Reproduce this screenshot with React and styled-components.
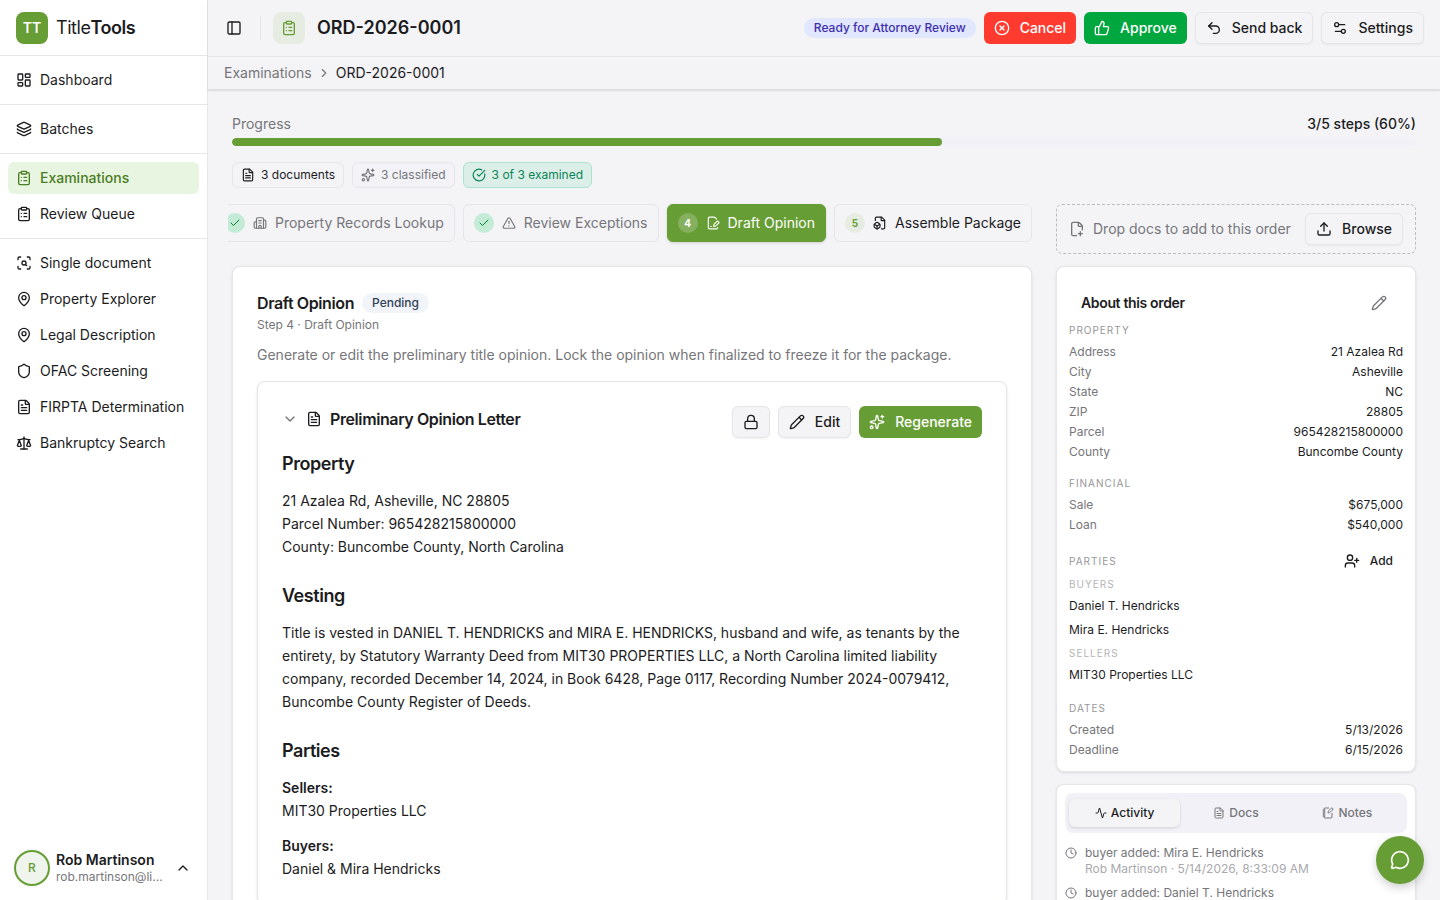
import React from "react";
import styled, { createGlobalStyle } from "styled-components";
import {
  Activity,
  Building2,
  Check,
  ChevronDown,
  ChevronRight,
  ChevronUp,
  CircleCheckBig,
  CircleX,
  ClipboardList,
  Clock,
  FileBox,
  FilePenLine,
  FilePlusCorner,
  FileText,
  Layers,
  LayoutDashboard,
  Lock,
  MapPin,
  MessageCircle,
  NotebookPen,
  PanelLeft,
  Pencil,
  Scale,
  ScanSearch,
  Settings2,
  Shield,
  Sparkles,
  ThumbsUp,
  TriangleAlert,
  Undo2,
  Upload,
  UserPlus,
} from "lucide-react";

const green = "#669d34";
const text = "#1c1c1e";
const muted = "#76767a";
const faint = "#a9a9ad";
const line = "#e5e5ea";
const surface = "#f4f4f7";

const GlobalStyle = createGlobalStyle`
  * {
    box-sizing: border-box;
  }

  body {
    margin: 0;
    background: ${surface};
    color: ${text};
    font-family: Inter, "Liberation Sans", sans-serif;
    font-size: 14px;
    line-height: 20px;
    -webkit-font-smoothing: antialiased;
  }

  h1, h2, h3, h4, p, ul, dl, dd {
    margin: 0;
    padding: 0;
  }

  ul {
    list-style: none;
  }

  a {
    color: inherit;
    text-decoration: none;
  }

  button {
    font: inherit;
    color: inherit;
    cursor: pointer;
  }

  svg {
    flex-shrink: 0;
  }
`;

const Shell = styled.div`
  display: flex;
  height: 100vh;
  overflow: hidden;
`;

/* sidebar */

const Sidebar = styled.aside`
  display: flex;
  flex-direction: column;
  flex: 0 0 208px;
  background: white;
  border-right: 1px solid ${line};
`;

const Brand = styled.a`
  display: flex;
  align-items: center;
  gap: 8px;
  height: 56px;
  padding: 0 16px;
  border-bottom: 1px solid ${line};
  font-size: 18px;
  line-height: 28px;
  letter-spacing: -0.025em;

  b {
    font-weight: 600;
  }
`;

const BrandMark = styled.span`
  display: flex;
  align-items: center;
  justify-content: center;
  width: 32px;
  height: 32px;
  border-radius: 8px;
  background: ${green};
  color: white;
  font-size: 14px;
  font-weight: 600;
  letter-spacing: normal;
`;

const NavGroup = styled.ul`
  display: flex;
  flex-direction: column;
  gap: 4px;
  padding: 8px;
  border-bottom: 1px solid ${line};

  &:last-child {
    border-bottom: none;
  }
`;

const NavLink = styled.a`
  display: flex;
  align-items: center;
  gap: 8px;
  height: 32px;
  padding: 0 8px;
  border-radius: 6px;
  background: ${(props) => (props.$active ? "#e8f5e0" : "transparent")};
  color: ${(props) => (props.$active ? "#4a7c23" : text)};
  font-weight: ${(props) => (props.$active ? 500 : 400)};
`;

const UserMenu = styled.button`
  display: flex;
  align-items: center;
  gap: 6px;
  margin-top: auto;
  padding: 14px 16px 14px 14px;
  border: none;
  background: none;
  text-align: left;

  svg {
    margin-left: auto;
  }
`;

const Avatar = styled.span`
  display: flex;
  align-items: center;
  justify-content: center;
  flex-shrink: 0;
  width: 36px;
  height: 36px;
  border: 2px solid ${green};
  border-radius: 50%;
  background: #eff4ec;
  color: ${green};
  font-size: 12px;
  font-weight: 500;
`;

const UserText = styled.span`
  display: flex;
  flex-direction: column;
`;

const UserName = styled.span`
  font-weight: 600;
  line-height: 18px;
`;

const UserMail = styled.span`
  color: ${muted};
  font-size: 12px;
  line-height: 16px;
`;

/* header */

const Page = styled.div`
  display: flex;
  flex-direction: column;
  flex: 1;
  min-width: 0;
`;

const Header = styled.header`
  border-bottom: 1px solid #dddde1;
  box-shadow: 0 1px 2px rgba(0, 0, 0, 0.1);
`;

const TopBar = styled.div`
  display: flex;
  align-items: center;
  gap: 12px;
  height: 57px;
  padding: 0 16px;
  border-bottom: 1px solid ${line};
`;

const PanelToggle = styled.button`
  display: flex;
  padding: 2px;
  border: none;
  background: none;
`;

const Divider = styled.span`
  width: 1px;
  height: 24px;
  margin-left: 4px;
  background: ${line};
`;

const OrderIcon = styled.span`
  display: flex;
  align-items: center;
  justify-content: center;
  width: 32px;
  height: 32px;
  border-radius: 8px;
  background: #e6ece2;
  color: ${green};
`;

const OrderTitle = styled.h1`
  font-size: 18px;
  line-height: 28px;
  font-weight: 600;
`;

const Actions = styled.div`
  display: flex;
  align-items: center;
  gap: 8px;
  margin-left: auto;
`;

const Badge = styled.span`
  padding: 2px 10px;
  border-radius: 10px;
  background: ${(props) => (props.$tone === "indigo" ? "#e0e7ff" : "#f1f5f9")};
  color: ${(props) => (props.$tone === "indigo" ? "#3f2fae" : "#314158")};
  font-size: 12px;
  line-height: 16px;
  font-weight: 500;
  white-space: nowrap;
`;

const tones = {
  red: "#ff3b30",
  green: "#00a63e",
  brand: green,
};

const Button = styled.button`
  display: flex;
  align-items: center;
  gap: 10px;
  height: 32px;
  padding: 0 10px;
  border: ${(props) => (props.$tone ? "none" : `1px solid ${line}`)};
  border-radius: 6px;
  background: ${(props) => tones[props.$tone] || surface};
  color: ${(props) => (props.$tone ? "white" : text)};
  font-weight: 500;
  white-space: nowrap;
  box-shadow: ${(props) => (props.$tone ? "none" : "0 1px 2px rgba(0, 0, 0, 0.05)")};
`;

const GhostButton = styled.button`
  display: flex;
  align-items: center;
  gap: 10px;
  height: 24px;
  padding: 0 10px;
  border: none;
  background: none;
  color: ${(props) => (props.$muted ? muted : text)};
  font-size: 12px;
  font-weight: 500;
`;

const Crumbs = styled.nav`
  display: flex;
  align-items: center;
  gap: 5px;
  height: 32px;
  padding: 0 16px;
  color: ${muted};
`;

const Current = styled.span`
  color: ${text};
`;

/* progress */

const Main = styled.main`
  flex: 1;
  min-height: 0;
  padding: 24px;
  overflow: hidden;
`;

const ProgressRow = styled.div`
  display: flex;
  justify-content: space-between;
  margin-bottom: 4px;
  color: ${muted};
`;

const Steps = styled.span`
  color: ${text};
  font-weight: 500;
`;

const Track = styled.div`
  height: 8px;
  overflow: hidden;
  border-radius: 4px;
  background: #f2f1f7;
`;

const Fill = styled.div`
  height: 100%;
  border-radius: 4px;
  background: ${green};
`;

const Chips = styled.div`
  display: flex;
  gap: 8px;
  margin: 16px 0;
`;

const chipTones = {
  plain: { color: text, border: line, background: surface },
  muted: { color: muted, border: line, background: "#f2f2f7" },
  done: { color: "#0b8457", border: "#a9e4cd", background: "#dbefe8" },
};

const Chip = styled.span`
  display: flex;
  align-items: center;
  gap: 6px;
  height: 26px;
  padding: 0 8px;
  border: 1px solid ${(props) => chipTones[props.$tone].border};
  border-radius: 6px;
  background: ${(props) => chipTones[props.$tone].background};
  color: ${(props) => chipTones[props.$tone].color};
  font-size: 12px;
`;

/* two columns */

const Columns = styled.div`
  display: grid;
  grid-template-columns: minmax(0, 1fr) 360px;
  gap: 24px;
`;

const StepStrip = styled.div`
  display: flex;
  justify-content: flex-end;
  gap: 8px;
  margin: -4px 0 20px -4px;
  padding: 4px 0;
  overflow: hidden;
`;

const Step = styled.button`
  display: flex;
  align-items: center;
  flex-shrink: 0;
  gap: 8px;
  height: 38px;
  padding: 0 10px;
  border: 1px solid ${(props) => (props.$state === "current" ? green : line)};
  border-radius: 6px;
  background: ${(props) => (props.$state === "current" ? green : surface)};
  color: ${(props) =>
    props.$state === "current" ? "white" : props.$state === "done" ? muted : text};
  box-shadow: ${(props) =>
    props.$state === "current" ? "0 1px 3px rgba(0, 0, 0, 0.15)" : "none"};
`;

const stepDots = {
  done: { background: "#c3ebd5", color: "#008236" },
  current: { background: "#85b05f", color: "white" },
  next: { background: "#e6ece2", color: green },
};

const StepDot = styled.span`
  display: flex;
  align-items: center;
  justify-content: center;
  width: 20px;
  height: 20px;
  border-radius: 50%;
  background: ${(props) => stepDots[props.$state].background};
  color: ${(props) => stepDots[props.$state].color};
  font-size: 10px;
  font-weight: 700;
`;

const Card = styled.section`
  border: 1px solid ${line};
  border-radius: 8px;
  background: white;
  box-shadow: 0 1px 3px rgba(0, 0, 0, 0.1);
`;

const OpinionCard = styled(Card)`
  padding: 24px;
`;

const TitleRow = styled.div`
  display: flex;
  align-items: center;
  gap: 8px;
`;

const CardTitle = styled.h2`
  font-size: 16px;
  line-height: 24px;
  font-weight: 600;
  letter-spacing: -0.025em;
`;

const Subtitle = styled.p`
  margin-top: 2px;
  color: ${muted};
  font-size: 12px;
  line-height: 16px;
`;

const Description = styled.p`
  margin: 12px 0 16px;
  color: ${muted};
`;

const LetterHead = styled.div`
  display: flex;
  justify-content: space-between;
  margin-bottom: 12px;
`;

const LetterTitle = styled(TitleRow)`
  height: 26px;
`;

const ButtonRow = styled.div`
  display: flex;
  gap: 8px;
`;

const Letter = styled.div`
  line-height: 23px;

  h3 {
    margin: 24px 0 11px;
    font-size: 18px;
    line-height: 28px;
    font-weight: 600;
    letter-spacing: -0.025em;
  }

  h3:first-child {
    margin-top: 0;
  }

  p + p {
    margin-top: 12px;
  }

  strong {
    font-weight: 600;
  }
`;

/* right column */

const Aside = styled.aside`
  display: flex;
  flex-direction: column;
  gap: 12px;
`;

const DropZone = styled.div`
  display: flex;
  align-items: center;
  gap: 8px;
  padding: 8px 12px;
  border: 1px dashed #bcbcc0;
  border-radius: 6px;
  color: ${muted};

  button {
    margin-left: auto;
  }
`;

const AboutCard = styled(Card)`
  display: flex;
  flex-direction: column;
  gap: 14px;
  padding: 20px 12px 11px;
`;

const AboutHead = styled.div`
  display: flex;
  align-items: center;
  justify-content: space-between;
  height: 32px;
  margin-bottom: -10px;
  padding: 0 6px 0 12px;

  h2 {
    font-size: 14px;
    line-height: 20px;
  }
`;

const Label = styled.h3`
  color: ${(props) => (props.$faint ? "#b4b4b8" : "#96969a")};
  font-size: 10px;
  line-height: 15px;
  font-weight: 400;
  letter-spacing: 1px;
  text-transform: uppercase;
`;

const Facts = styled.dl`
  margin-top: 4px;
  font-size: 12px;

  div {
    display: flex;
    justify-content: space-between;
  }

  dt {
    color: ${muted};
  }
`;

const PartiesHead = styled.div`
  display: flex;
  align-items: center;
  justify-content: space-between;
`;

const People = styled.div`
  margin-top: 4px;

  li {
    font-size: 12px;
    line-height: 24px;
  }

  ul {
    margin-top: 2px;
  }
`;

const FeedCard = styled(Card)`
  padding: 8px;
`;

const Tabs = styled.div`
  display: grid;
  grid-template-columns: repeat(3, 1fr);
  padding: 6px 4px;
  border-radius: 8px;
  background: #f2f1f7;
`;

const Tab = styled.button`
  display: flex;
  align-items: center;
  justify-content: center;
  gap: 4px;
  height: 28px;
  border: none;
  border-radius: 6px;
  background: ${(props) => (props.$active ? surface : "transparent")};
  box-shadow: ${(props) => (props.$active ? "0 1px 3px rgba(0, 0, 0, 0.15)" : "none")};
  color: ${(props) => (props.$active ? text : muted)};
  font-size: 12px;
  font-weight: 500;
`;

const Feed = styled.ul`
  display: flex;
  flex-direction: column;
  gap: 8px;
  margin-top: 12px;

  li {
    display: flex;
    gap: 8px;
    color: ${muted};
    font-size: 12px;
    line-height: 16px;
  }

  svg {
    margin-top: 2px;
  }
`;

const FeedMeta = styled.p`
  color: ${faint};
`;

const ChatButton = styled.button`
  position: fixed;
  right: 16px;
  bottom: 16px;
  display: flex;
  align-items: center;
  justify-content: center;
  width: 48px;
  height: 48px;
  border: none;
  border-radius: 50%;
  background: ${green};
  color: white;
  box-shadow: 0 4px 10px rgba(0, 0, 0, 0.18);
`;

const navGroups = [
  [{ label: "Dashboard", icon: LayoutDashboard }],
  [{ label: "Batches", icon: Layers }],
  [
    { label: "Examinations", icon: ClipboardList, active: true },
    { label: "Review Queue", icon: ClipboardList },
  ],
  [
    { label: "Single document", icon: ScanSearch },
    { label: "Property Explorer", icon: MapPin },
    { label: "Legal Description", icon: MapPin },
    { label: "OFAC Screening", icon: Shield },
    { label: "FIRPTA Determination", icon: FileText },
    { label: "Bankruptcy Search", icon: Scale },
  ],
];

const steps = [
  { label: "Property Records Lookup", icon: Building2, state: "done" },
  { label: "Review Exceptions", icon: TriangleAlert, state: "done" },
  { label: "Draft Opinion", icon: FilePenLine, state: "current", number: 4 },
  { label: "Assemble Package", icon: FileBox, state: "next", number: 5 },
];

const property = [
  ["Address", "21 Azalea Rd"],
  ["City", "Asheville"],
  ["State", "NC"],
  ["ZIP", "28805"],
  ["Parcel", "965428215800000"],
  ["County", "Buncombe County"],
];

const financial = [
  ["Sale", "$675,000"],
  ["Loan", "$540,000"],
];

const dates = [
  ["Created", "5/13/2026"],
  ["Deadline", "6/15/2026"],
];

const activity = [
  { id: 1, title: "buyer added: Mira E. Hendricks", meta: "Rob Martinson · 5/14/2026, 8:33:09 AM" },
  { id: 2, title: "buyer added: Daniel T. Hendricks" },
];

function FactSection({ title, rows }) {
  return (
    <div>
      <Label>{title}</Label>
      <Facts>
        {rows.map(([name, value]) => (
          <div key={name}>
            <dt>{name}</dt>
            <dd>{value}</dd>
          </div>
        ))}
      </Facts>
    </div>
  );
}

function PeopleList({ title, names }) {
  return (
    <People>
      <Label as="h4" $faint>{title}</Label>
      <ul>
        {names.map((name) => (
          <li key={name}>{name}</li>
        ))}
      </ul>
    </People>
  );
}

function AppSidebar() {
  return (
    <Sidebar>
      <Brand href="#">
        <BrandMark>TT</BrandMark>
        <span>Title<b>Tools</b></span>
      </Brand>
      <nav>
        {navGroups.map((group, i) => (
          <NavGroup key={i}>
            {group.map(({ label, icon: Icon, active }) => (
              <li key={label}>
                <NavLink href="#" $active={active}>
                  <Icon size={16} />
                  {label}
                </NavLink>
              </li>
            ))}
          </NavGroup>
        ))}
      </nav>
      <UserMenu>
        <Avatar>R</Avatar>
        <UserText>
          <UserName>Rob Martinson</UserName>
          <UserMail>rob.martinson@li...</UserMail>
        </UserText>
        <ChevronUp size={16} />
      </UserMenu>
    </Sidebar>
  );
}

function OpinionLetter() {
  return (
    <OpinionCard>
      <LetterHead>
        <LetterTitle>
          <ChevronDown size={16} color={muted} />
          <FileText size={16} />
          <CardTitle>Preliminary Opinion Letter</CardTitle>
        </LetterTitle>
        <ButtonRow>
          <Button aria-label="Lock"><Lock size={16} /></Button>
          <Button><Pencil size={16} />Edit</Button>
          <Button $tone="brand"><Sparkles size={16} />Regenerate</Button>
        </ButtonRow>
      </LetterHead>
      <Letter>
        <h3>Property</h3>
        <p>
          21 Azalea Rd, Asheville, NC 28805<br />
          Parcel Number: 965428215800000<br />
          County: Buncombe County, North Carolina
        </p>
        <h3>Vesting</h3>
        <p>
          Title is vested in DANIEL T. HENDRICKS and MIRA E. HENDRICKS, husband and wife, as
          tenants by the entirety, by Statutory Warranty Deed from MIT30 PROPERTIES LLC, a North
          Carolina limited liability company, recorded December 14, 2024, in Book 6428, Page 0117,
          Recording Number 2024-0079412, Buncombe County Register of Deeds.
        </p>
        <h3>Parties</h3>
        <p>
          <strong>Sellers:</strong><br />
          MIT30 Properties LLC
        </p>
        <p>
          <strong>Buyers:</strong><br />
          Daniel &amp; Mira Hendricks
        </p>
      </Letter>
    </OpinionCard>
  );
}

export default function App() {
  return (
    <>
      <GlobalStyle />
      <Shell>
        <AppSidebar />
        <Page>
          <Header>
            <TopBar>
              <PanelToggle aria-label="Toggle sidebar"><PanelLeft size={16} /></PanelToggle>
              <Divider />
              <OrderIcon><ClipboardList size={16} /></OrderIcon>
              <OrderTitle>ORD-2026-0001</OrderTitle>
              <Actions>
                <Badge $tone="indigo">Ready for Attorney Review</Badge>
                <Button $tone="red"><CircleX size={16} />Cancel</Button>
                <Button $tone="green"><ThumbsUp size={16} />Approve</Button>
                <Button><Undo2 size={16} />Send back</Button>
                <Button><Settings2 size={16} />Settings</Button>
              </Actions>
            </TopBar>
            <Crumbs>
              <a href="#">Examinations</a>
              <ChevronRight size={14} />
              <Current>ORD-2026-0001</Current>
            </Crumbs>
          </Header>
          <Main>
            <ProgressRow>
              <span>Progress</span>
              <Steps>3/5 steps (60%)</Steps>
            </ProgressRow>
            <Track role="progressbar" aria-label="Progress" aria-valuenow={60}>
              <Fill style={{ width: `${(3 / 5) * 100}%` }} />
            </Track>
            <Chips>
              <Chip $tone="plain"><FileText size={14} />3 documents</Chip>
              <Chip $tone="muted"><Sparkles size={14} />3 classified</Chip>
              <Chip $tone="done"><CircleCheckBig size={14} />3 of 3 examined</Chip>
            </Chips>
            <Columns>
              <div>
                <StepStrip>
                  {steps.map(({ label, icon: Icon, state, number }) => (
                    <Step key={label} $state={state}>
                      <StepDot $state={state}>{number || <Check size={12} />}</StepDot>
                      <Icon size={14} />
                      {label}
                    </Step>
                  ))}
                </StepStrip>
                <OpinionCard>
                  <TitleRow>
                    <CardTitle>Draft Opinion</CardTitle>
                    <Badge>Pending</Badge>
                  </TitleRow>
                  <Subtitle>Step 4 · Draft Opinion</Subtitle>
                  <Description>
                    Generate or edit the preliminary title opinion. Lock the opinion when finalized
                    to freeze it for the package.
                  </Description>
                  <OpinionLetter />
                </OpinionCard>
              </div>
              <Aside>
                <DropZone>
                  <FilePlusCorner size={16} />
                  Drop docs to add to this order
                  <Button><Upload size={16} />Browse</Button>
                </DropZone>
                <AboutCard>
                  <AboutHead>
                    <CardTitle>About this order</CardTitle>
                    <GhostButton $muted aria-label="Edit order"><Pencil size={16} /></GhostButton>
                  </AboutHead>
                  <FactSection title="Property" rows={property} />
                  <FactSection title="Financial" rows={financial} />
                  <div>
                    <PartiesHead>
                      <Label>Parties</Label>
                      <GhostButton><UserPlus size={16} />Add</GhostButton>
                    </PartiesHead>
                    <PeopleList title="Buyers" names={["Daniel T. Hendricks", "Mira E. Hendricks"]} />
                    <PeopleList title="Sellers" names={["MIT30 Properties LLC"]} />
                  </div>
                  <FactSection title="Dates" rows={dates} />
                </AboutCard>
                <FeedCard>
                  <Tabs role="tablist">
                    <Tab role="tab" aria-selected $active><Activity size={12} />Activity</Tab>
                    <Tab role="tab"><FileText size={12} />Docs</Tab>
                    <Tab role="tab"><NotebookPen size={12} />Notes</Tab>
                  </Tabs>
                  <Feed>
                    {activity.map((item) => (
                      <li key={item.id}>
                        <Clock size={12} />
                        <div>
                          <p>{item.title}</p>
                          {item.meta && <FeedMeta>{item.meta}</FeedMeta>}
                        </div>
                      </li>
                    ))}
                  </Feed>
                </FeedCard>
              </Aside>
            </Columns>
          </Main>
        </Page>
      </Shell>
      <ChatButton aria-label="Open chat"><MessageCircle size={20} /></ChatButton>
    </>
  );
}
